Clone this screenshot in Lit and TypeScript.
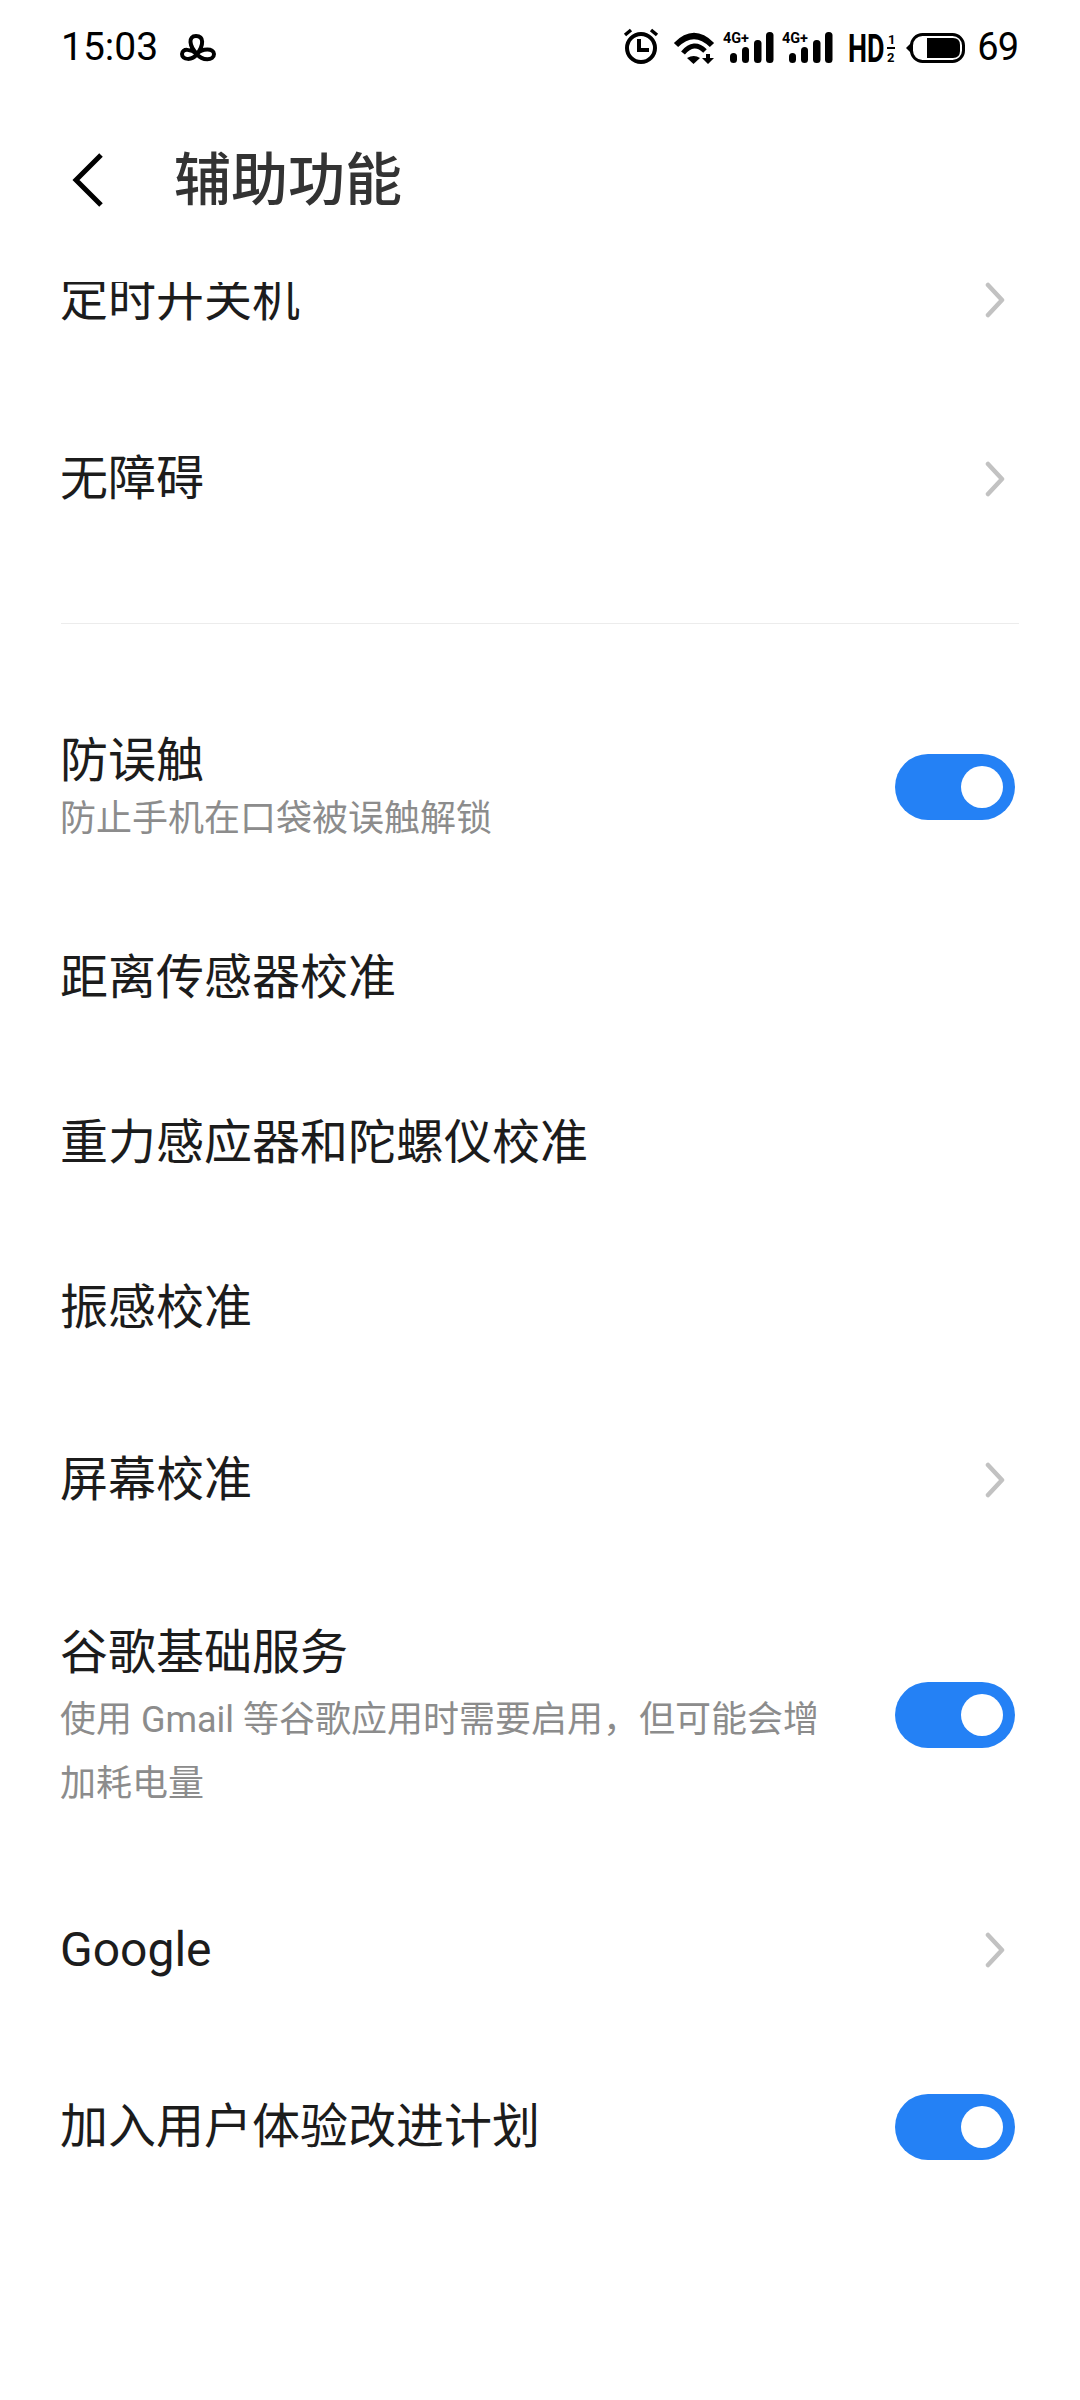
import { LitElement, html, css, svg } from 'lit';
import { customElement, property } from 'lit/decorators.js';

const chevron = html`<svg class="chev" width="20" height="36" viewBox="0 0 20 36"><path d="M3 3 L17 18 L3 33" fill="none" stroke="#c2c2c2" stroke-width="4.5" stroke-linecap="round" stroke-linejoin="round"/></svg>`;

// four signal bars, x is the left edge of the first one
const bars = (x: number) => svg`
  <rect x=${x} y="53" width="7" height="10" rx="3.5"/>
  <rect x=${x + 12} y="47" width="7" height="16" rx="3.5"/>
  <rect x=${x + 24} y="40" width="7.5" height="23" rx="3.5"/>
  <rect x=${x + 36} y="32" width="7.5" height="31" rx="3.5"/>`;

@customElement('app-switch')
export class AppSwitch extends LitElement {
  static styles = css`
    :host { display: block; width: 120px; height: 66px; flex: none; }
    .track { height: 100%; border-radius: 33px; background: #2481f5; display: flex; align-items: center; justify-content: flex-end; padding-right: 12px; box-sizing: border-box; }
    .knob { width: 42px; height: 42px; border-radius: 50%; background: #fff; }
  `;
  render() {
    return html`<div class="track"><div class="knob"></div></div>`;
  }
}

@customElement('app-row')
export class AppRow extends LitElement {
  @property() label = '';
  @property() sub = '';
  @property() kind = '';
  @property({ type: Boolean }) wrap = false;
  static styles = css`
    :host { display: flex; align-items: center; justify-content: space-between; padding: 0 65px 0 60px; }
    .text { flex: 1; min-width: 0; }
    .label { font-size: 48px; line-height: 64px; color: #1c1c1c; }
    .sub { font-size: 36px; line-height: 52px; color: #8c8c8c; width: 760px; }
    .wrap { padding-top: 7px; }
    .wrap .sub { line-height: 64px; margin-top: 3px; }
    .chev { margin-right: 10px; flex: none; }
  `;
  render() {
    return html`
      <div class="text ${this.wrap ? 'wrap' : ''}">
        <div class="label">${this.label}</div>
        ${this.sub ? html`<div class="sub">${this.sub}</div>` : ''}
      </div>
      ${this.kind === 'switch' ? html`<app-switch></app-switch>` : this.kind === 'link' ? chevron : ''}`;
  }
}

@customElement('app-root')
export class AppRoot extends LitElement {
  static styles = css`
    :host { display: flex; flex-direction: column; width: 1080px; height: 2400px; background: #fff; overflow: hidden; font-family: Roboto, "Noto Sans CJK SC", sans-serif; }
    .status { height: 94px; flex: none; display: flex; align-items: center; padding: 0 62px 0 61px; color: #000; }
    .time { font-size: 39px; }
    .clover { margin: 3px 0 0 21px; }
    .right { margin-left: auto; display: flex; align-items: center; }
    .num { font-size: 38px; letter-spacing: -1px; margin-left: 1px; }
    .header { height: 188px; flex: none; display: flex; align-items: center; padding: 0 0 16px 72px; box-sizing: border-box; }
    .title { font-size: 57px; font-weight: 500; color: #333; margin-left: 70px; padding-bottom: 10px; }
    .list { flex: 1; min-height: 0; overflow: hidden; }
    .scroll { margin-top: -72px; }
    .scroll app-row { height: 179px; }
    .divider { height: 1px; background: #ececec; margin: 55px 61px 57px; }
    .scroll .tall { height: 212px; margin-bottom: 2px; }
    .scroll .plain { height: 165px; }
    .scroll .taller { height: 291px; }
    .scroll .last { height: 175px; }
  `;
  render() {
    return html`
      <div class="status">
        <span class="time">15:03</span>
        <svg class="clover" width="38" height="33" viewBox="178 32 38 33"><path d="M196 54 C188 46 187 36 195 36 C203 36 203 45 196 54 C190 49 181 48 181 54 C181 60 191 61 196 54 C201 48 213 48 213 54 C213 61 201 61 196 54 Z" fill="none" stroke="#000" stroke-width="4" stroke-linejoin="round"/></svg>
        <div class="right">
          <svg width="358" height="45" viewBox="620 25 358 45">
            <g fill="none" stroke="#000">
              <circle cx="643" cy="48" r="14" stroke-width="4"/>
              <path d="M641 39 V50 H651" stroke-width="4"/>
              <path d="M627 35 L633 30 M659 35 L653 30" stroke-width="3.5"/>
              <path d="M678 45 Q696 27 714 45" stroke-width="6"/>
              <path d="M685 53 Q696 40 707 51" stroke-width="5"/>
            </g>
            <path d="M689 58 Q696 54 702 58 L695.5 64 Z" fill="#000"/>
            <path d="M708 54 H712 V58 H716 L710 64 L704 58 H708 Z" fill="#000"/>
            <text x="725" y="43" font-size="15" font-weight="700" font-family="Roboto" textLength="26" lengthAdjust="spacingAndGlyphs">4G+</text>
            ${bars(732)}
            <text x="784" y="43" font-size="15" font-weight="700" font-family="Roboto" textLength="26" lengthAdjust="spacingAndGlyphs">4G+</text>
            ${bars(791)}
            <text transform="translate(850 62) scale(.69 1)" font-size="39" font-weight="700" font-family="Roboto">HD</text>
            <text x="890" y="44" font-size="13" font-weight="700" font-family="Roboto">1</text>
            <rect x="889" y="47" width="8" height="2"/>
            <text x="889" y="62" font-size="13" font-weight="700" font-family="Roboto">2</text>
            <path d="M913 43 L908 48 L913 53 Z"/>
            <rect x="913.5" y="34.5" width="52" height="27" rx="11" fill="none" stroke="#000" stroke-width="3"/>
            <path d="M929 38 H955 Q962 38 962 45 V51 Q962 58 955 58 H929 Z"/>
          </svg>
          <span class="num">69</span>
        </div>
      </div>
      <div class="header">
        <svg width="32" height="54" viewBox="0 0 32 54"><path d="M29 2 L4 27 L29 52" fill="none" stroke="#000" stroke-width="5"/></svg>
        <span class="title">辅助功能</span>
      </div>
      <div class="list">
        <div class="scroll">
          <app-row label="定时开关机" kind="link"></app-row>
          <app-row label="无障碍" kind="link"></app-row>
          <div class="divider"></div>
          <app-row class="tall" label="防误触" sub="防止手机在口袋被误触解锁" kind="switch"></app-row>
          <app-row class="plain" label="距离传感器校准"></app-row>
          <app-row class="plain" label="重力感应器和陀螺仪校准"></app-row>
          <app-row class="plain" label="振感校准"></app-row>
          <app-row label="屏幕校准" kind="link"></app-row>
          <app-row class="taller" label="谷歌基础服务" sub="使用 Gmail 等谷歌应用时需要启用，但可能会增加耗电量" kind="switch" wrap></app-row>
          <app-row label="Google" kind="link"></app-row>
          <app-row class="last" label="加入用户体验改进计划" kind="switch"></app-row>
        </div>
      </div>
    `;
  }
}
